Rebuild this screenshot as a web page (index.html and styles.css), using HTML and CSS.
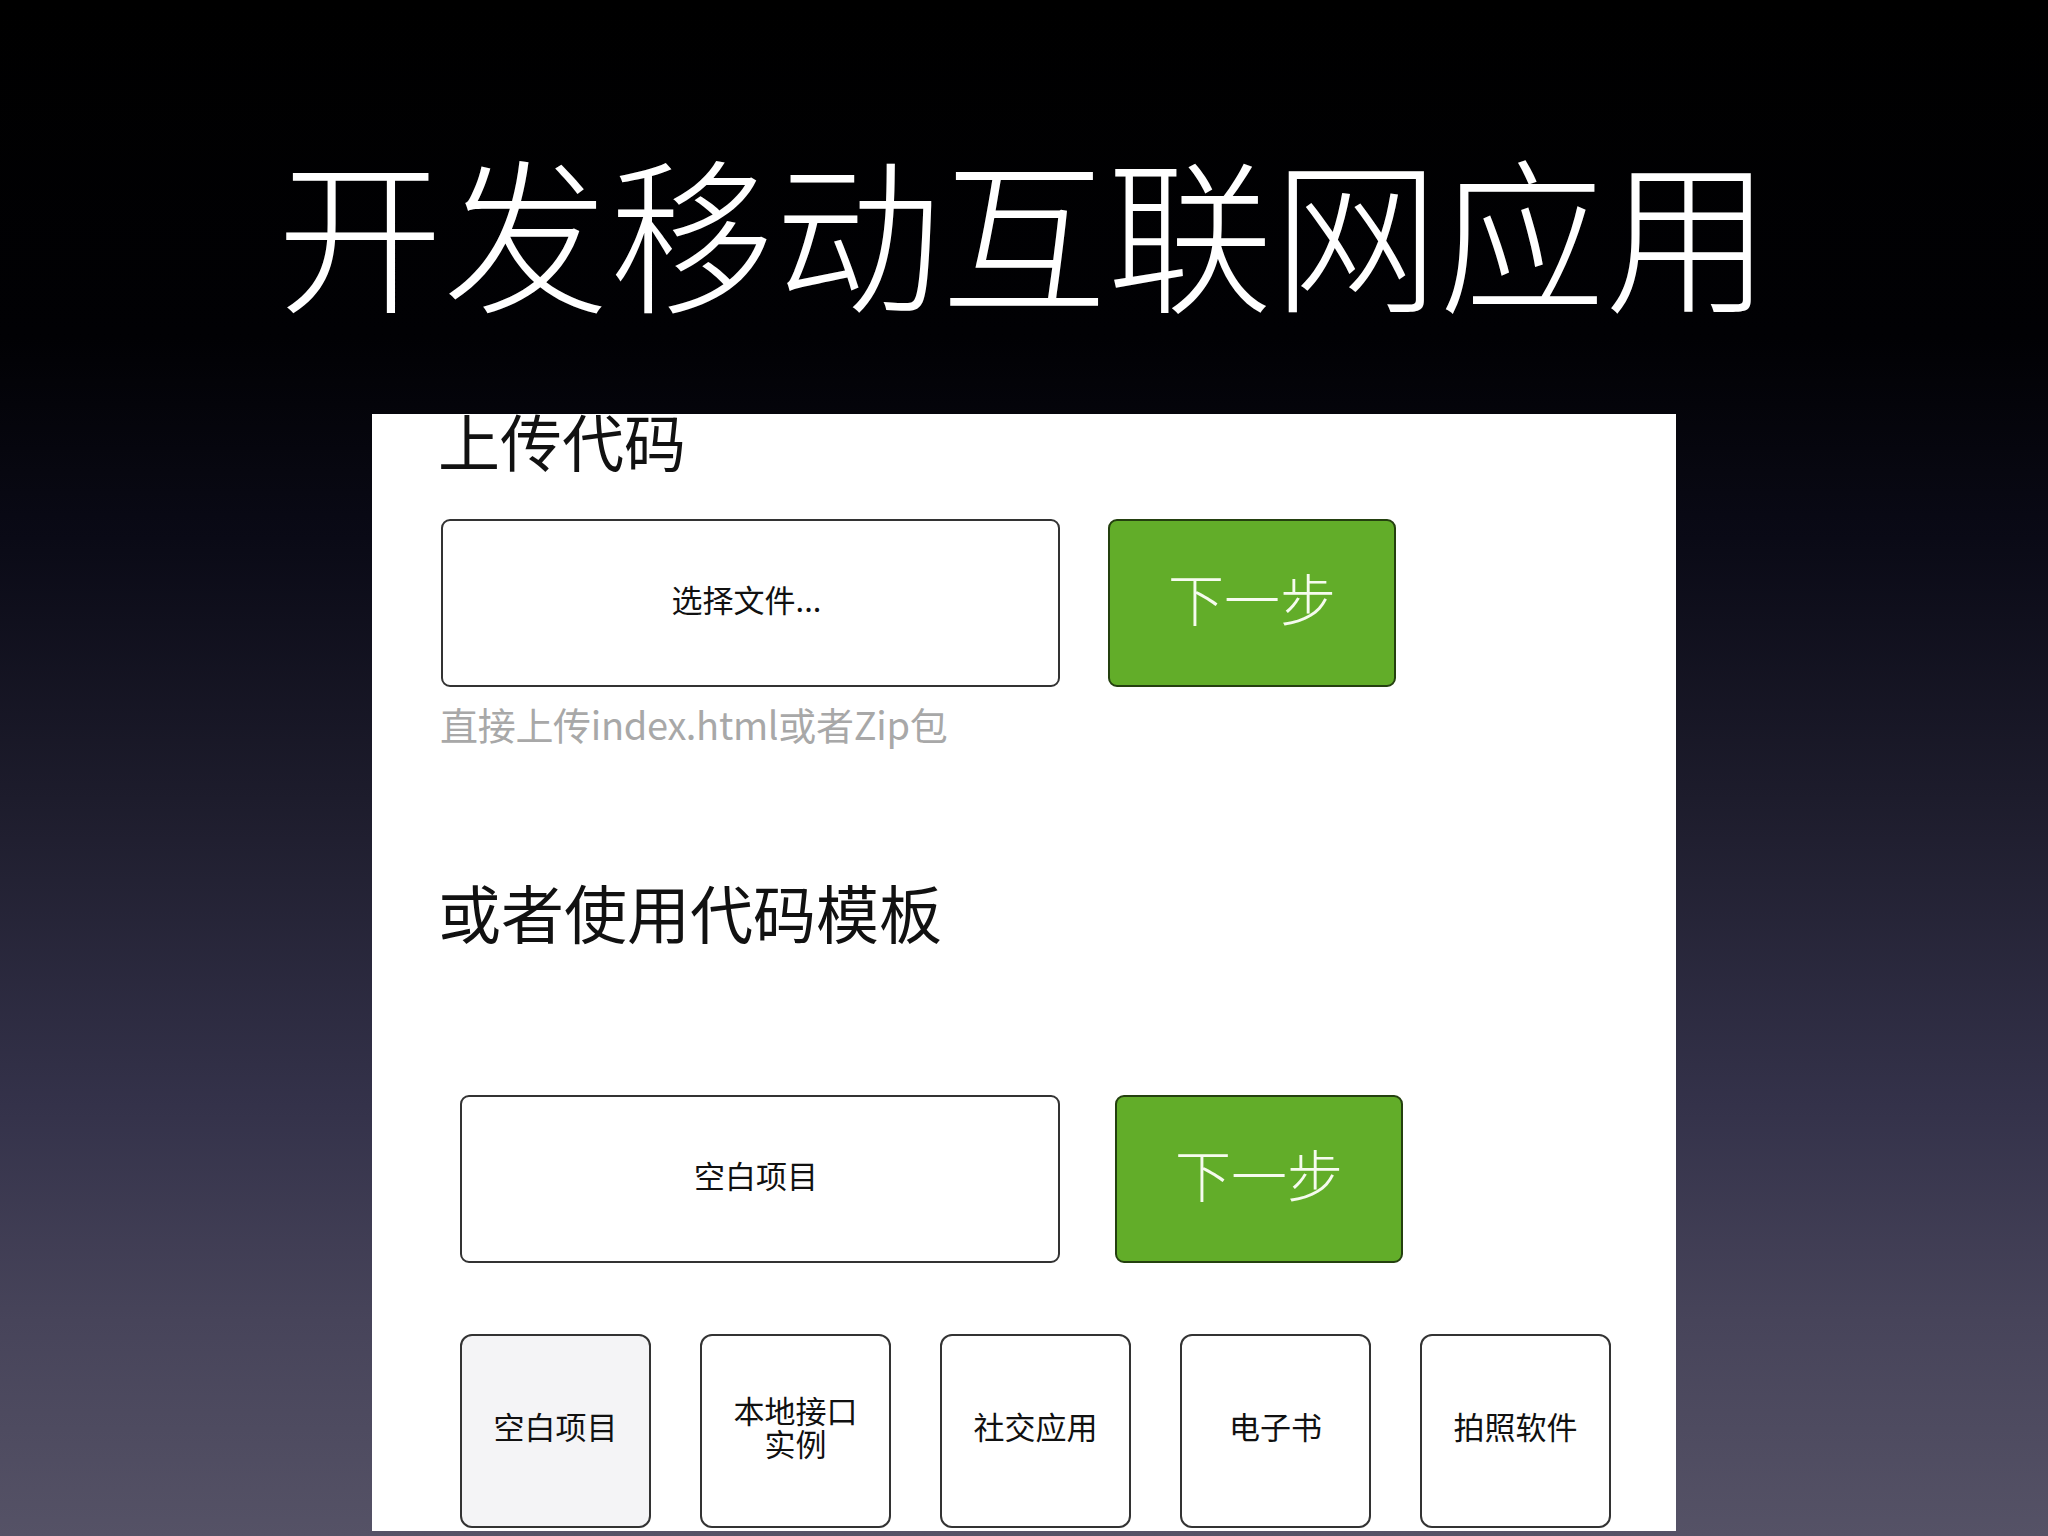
FILE: index.html
```html
<!DOCTYPE html>
<html lang="zh-CN">
<head>
<meta charset="utf-8">
<title>开发移动互联网应用</title>
<link rel="stylesheet" href="styles.css">
</head>
<body>
<header class="slide-head">
  <h1 class="slide-title">开发移动互联网应用</h1>
</header>
<main class="panel">
  <div class="panel-inner">
    <h2 class="section-title first">上传代码</h2>
    <div class="action-row">
      <div class="file-box">选择文件...</div>
      <div class="next-btn">下一步</div>
    </div>
    <p class="hint">直接上传index.html或者Zip包</p>
    <h2 class="section-title second">或者使用代码模板</h2>
    <div class="action-row indent">
      <div class="file-box narrow">空白项目</div>
      <div class="next-btn">下一步</div>
    </div>
    <div class="cards">
      <div class="card selected">空白项目</div>
      <div class="card">本地接口<br>实例</div>
      <div class="card">社交应用</div>
      <div class="card">电子书</div>
      <div class="card">拍照软件</div>
    </div>
  </div>
</main>
</body>
</html>
```
FILE: styles.css
```css
html, body {
  margin: 0;
  padding: 0;
}
body {
  width: 2048px;
  height: 1536px;
  overflow: hidden;
  background: linear-gradient(to bottom, #000000 0%, #010104 22%, #0a0a16 35%, #1d1c2c 52%, #34324a 72%, #47445a 86%, #555266 100%);
  font-family: "Noto Sans CJK SC", "Noto Sans", sans-serif;
}
.slide-head {
  height: 414px;
  box-sizing: border-box;
  padding-top: 145px;
}
.slide-title {
  margin: 0;
  text-align: center;
  color: #ffffff;
  font-family: "Noto Sans CJK SC", sans-serif;
  font-weight: 300;
  font-size: 166px;
  line-height: 1;
  letter-spacing: 0;
}
.panel {
  width: 1304px;
  height: 1117px;
  margin: 0 auto;
  background: #ffffff;
  overflow: hidden;
}
.panel-inner {
  padding-left: 66px;
  margin-top: -5px;
}
.section-title {
  margin: 0;
  font-weight: 400;
  font-size: 62px;
  line-height: 1;
  color: #111111;
}
.section-title.second {
  font-size: 63px;
  margin-top: 136px;
}
.action-row {
  display: flex;
  margin-top: 48px;
  margin-left: 3px;
}
.action-row.indent {
  margin-left: 22px;
  margin-top: 153px;
}
.file-box {
  width: 619px;
  height: 168px;
  box-sizing: border-box;
  border: 2px solid #333333;
  border-radius: 9px;
  display: flex;
  align-items: center;
  justify-content: center;
  font-size: 31px;
  color: #111111;
  padding-right: 8px;
  padding-bottom: 9px;
}
.file-box.narrow {
  width: 600px;
}
.next-btn {
  width: 288px;
  height: 168px;
  margin-left: 48px;
  box-sizing: border-box;
  border: 2px solid #24400f;
  border-radius: 9px;
  background: #62ad29;
  color: #f6fbef;
  font-size: 56px;
  font-weight: 300;
  display: flex;
  align-items: center;
  justify-content: center;
  padding-bottom: 13px;
}
.action-row.indent .next-btn {
  margin-left: 55px;
}
.hint {
  margin: 18px 0 0 2px;
  font-size: 38px;
  line-height: 1;
  color: #a8a8a8;
  letter-spacing: -0.3px;
}
.cards {
  display: flex;
  gap: 49px;
  margin-top: 71px;
  margin-left: 22px;
}
.card {
  width: 191px;
  height: 194px;
  box-sizing: border-box;
  border: 2px solid #333333;
  border-radius: 12px;
  background: #ffffff;
  display: flex;
  align-items: center;
  justify-content: center;
  text-align: center;
  font-size: 31px;
  line-height: 1.04;
  color: #111111;
  padding-bottom: 9px;
}
.card.selected {
  background: #f4f4f6;
}
```
